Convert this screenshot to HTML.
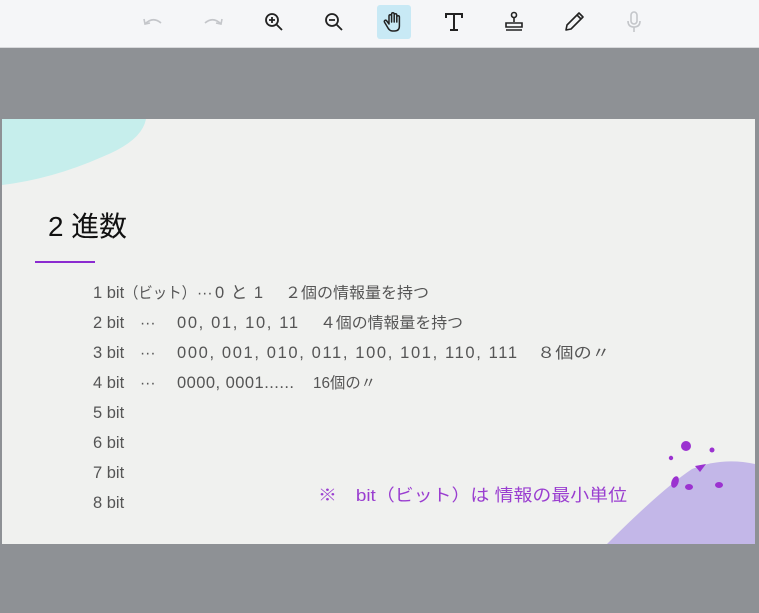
<!DOCTYPE html>
<html><head><meta charset="utf-8"><style>
*{margin:0;padding:0}
body{width:759px;height:613px;background:#8e9195;position:relative;overflow:hidden;font-family:"Liberation Sans","Noto Sans CJK JP",sans-serif}
#tb{position:absolute;left:0;top:0;width:759px;height:47px;background:#f5f6f8;border-bottom:1px solid #d8d9dc}
#tb svg{position:absolute;top:9px}
#slide{position:absolute;left:2px;top:119px;width:753px;height:425px;background:#f0f1ef;overflow:hidden}
text{font-family:"Liberation Sans","Noto Sans CJK JP",sans-serif}
.t{font-size:15.5px;fill:#555}
.n{font-size:16.5px}
</style></head><body>
<div id="tb">
<svg style="left:140px" width="26" height="26" viewBox="0 0 26 26" fill="none" stroke="#c4c6ca" stroke-width="1.6"><path d="M5 15 Q13 7 21 14"/><path d="M4 10 L5 15 L10 14"/></svg>
<svg style="left:200px" width="26" height="26" viewBox="0 0 26 26" fill="none" stroke="#c4c6ca" stroke-width="1.6"><path d="M21 15 Q13 7 5 14"/><path d="M22 10 L21 15 L16 14"/></svg>
<svg style="left:261px" width="26" height="26" viewBox="0 0 26 26" fill="none" stroke="#222" stroke-width="1.8"><circle cx="11" cy="11" r="6"/><path d="M15.5 15.5 L21 21M11 8v6M8 11h6"/></svg>
<svg style="left:321px" width="26" height="26" viewBox="0 0 26 26" fill="none" stroke="#222" stroke-width="1.8"><circle cx="11" cy="11" r="6"/><path d="M15.5 15.5 L21 21M8 11h6"/></svg>
<div style="position:absolute;left:377px;top:5px;width:34px;height:34px;background:#c8e9f5;border-radius:3px"></div>
<svg style="left:381px" width="26" height="26" viewBox="0 0 26 26" fill="none" stroke="#222" stroke-width="1.5" stroke-linejoin="round"><path d="M8 15 V7 a1.3 1.3 0 0 1 2.6 0 V13 V5 a1.3 1.3 0 0 1 2.6 0 V13 V6 a1.3 1.3 0 0 1 2.6 0 V13 V8 a1.3 1.3 0 0 1 2.6 0 V17 q0 5 -5 5 h-2 q-3 0 -5 -4 l-3 -5 a1.3 1.3 0 0 1 2 -1.5 z"/></svg>
<svg style="left:441px" width="26" height="26" viewBox="0 0 26 26" fill="none" stroke="#222" stroke-width="2"><path d="M5 9V5h16v4M13 5v16M9 21h8"/></svg>
<svg style="left:501px" width="26" height="26" viewBox="0 0 26 26" fill="none" stroke="#222" stroke-width="1.6"><circle cx="13" cy="6" r="2.5"/><path d="M13 8.5V13M5 14h16v4H5zM5 21h16"/></svg>
<svg style="left:561px" width="26" height="26" viewBox="0 0 26 26" fill="none" stroke="#222" stroke-width="1.6" stroke-linejoin="round"><path d="M5 21 L6 16 L18 4 L22 8 L10 20 Z M16 6 L20 10"/></svg>
<svg style="left:621px" width="26" height="26" viewBox="0 0 26 26" fill="none" stroke="#c4c6ca" stroke-width="1.6"><rect x="10" y="3" width="6" height="12" rx="3"/><path d="M7 12q0 6 6 6q6 0 6-6M13 18v5"/></svg>
</div>
<div id="slide">
<svg style="position:absolute;left:0;top:0" width="753" height="425" viewBox="2 119 753 425">
<path d="M2 119 H146 Q142 141 102 157 Q52 179 2 185 Z" fill="#c6eeec"/>
<path d="M607 544 Q662 489 692 469 Q722 457 755 464 V544 Z" fill="#c3b7e8"/>
<g fill="#9b32d0"><circle cx="686" cy="446" r="5"/><circle cx="712" cy="450" r="2.5"/><circle cx="671" cy="458" r="2.2"/><path d="M695 466 l11 -2 l-6 8 z"/><ellipse cx="675" cy="482" rx="3.5" ry="6" transform="rotate(20 675 482)"/><ellipse cx="689" cy="487" rx="4" ry="3"/><ellipse cx="719" cy="485" rx="4" ry="3"/></g>
<rect x="35" y="261" width="60" height="2" fill="#8b2bd0"/>
<text x="48" y="236" font-size="28" fill="#111" textLength="79" lengthAdjust="spacingAndGlyphs">2 進数</text>
<g class="t">
<text x="93" y="298" class="n">1 bit</text>
<text x="124" y="298" textLength="72" lengthAdjust="spacingAndGlyphs">（ビット）</text>
<text x="197" y="298">···</text>
<text x="215" y="298" class="n" textLength="48" lengthAdjust="spacing">0と1</text>
<text x="285" y="298" textLength="144" lengthAdjust="spacingAndGlyphs">２個の情報量を持つ</text>
<text x="93" y="328" class="n">2 bit</text>
<text x="140" y="328">···</text>
<text x="177" y="328" class="n" textLength="121" lengthAdjust="spacing">00, 01, 10, 11</text>
<text x="320" y="328" textLength="143" lengthAdjust="spacingAndGlyphs">４個の情報量を持つ</text>
<text x="93" y="358" class="n">3 bit</text>
<text x="140" y="358">···</text>
<text x="177" y="358" class="n" textLength="340" lengthAdjust="spacing">000, 001, 010, 011, 100, 101, 110, 111</text>
<text x="537" y="358" textLength="73" lengthAdjust="spacingAndGlyphs">８個の〃</text>
<text x="93" y="388" class="n">4 bit</text>
<text x="140" y="388">···</text>
<text x="177" y="388" class="n" textLength="117" lengthAdjust="spacing">0000, 0001......</text>
<text x="313" y="388" textLength="63" lengthAdjust="spacingAndGlyphs">16個の〃</text>
<text x="93" y="418" class="n">5 bit</text>
<text x="93" y="448" class="n">6 bit</text>
<text x="93" y="478" class="n">7 bit</text>
<text x="93" y="508" class="n">8 bit</text>
</g>
<text x="318" y="501" font-size="17" fill="#9a3ed0" textLength="309" lengthAdjust="spacingAndGlyphs">※　bit（ビット）は 情報の最小単位</text>
</svg>
</div>
</body></html>
